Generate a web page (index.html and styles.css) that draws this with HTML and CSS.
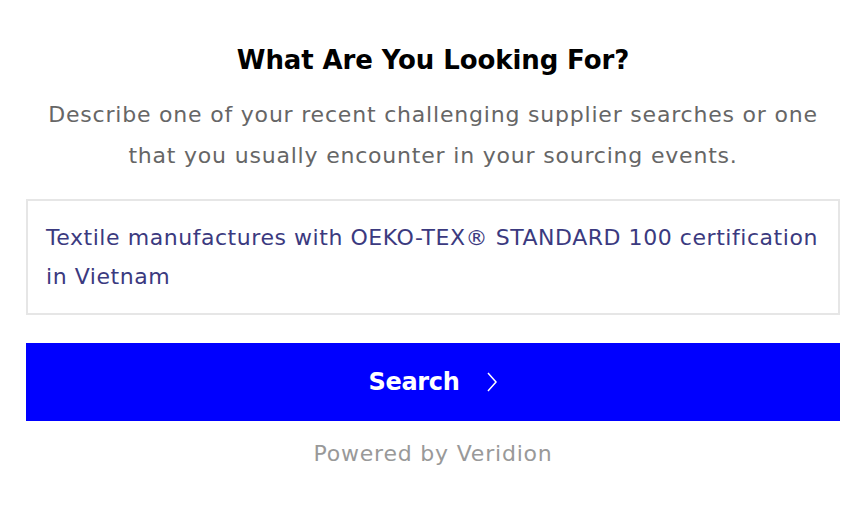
FILE: index.html
```html
<!DOCTYPE html>
<html lang="en">
  <head>
    <meta charset="UTF-8" />
    <title>Supplier Search</title>
    <link rel="stylesheet" href="styles.css">
  </head>
  <body>
    <main class="search-card">
      <h1 class="title">What Are You Looking For?</h1>
      <p class="intro">
        Describe one of your recent challenging supplier searches or one
        that you usually encounter in your sourcing events.
      </p>

      <div class="query-box">
        Textile manufactures with OEKO-TEX® STANDARD 100 certification in Vietnam
      </div>

      <button class="search-btn" type="button">
        <span>Search</span>
        <svg class="chevron" width="12" height="22" viewBox="0 0 12 22">
          <path d="M2 2 L10 11 L2 20" fill="none" stroke="#fff" stroke-width="1.5" />
        </svg>
      </button>

      <p class="powered">Powered by Veridion</p>
    </main>
  </body>
</html>
```

FILE: styles.css
```css
body {
  margin: 0;
  background: #fff;
  font-family: "DejaVu Sans", Inter, sans-serif;
}

.search-card {
  padding: 40px 25px 0 26px;
  text-align: center;
}

.title {
  margin: 0;
  font-size: 26px;
  line-height: 40px;
  font-weight: 700;
  letter-spacing: -0.1px;
  color: #000;
}

.intro {
  max-width: 790px;
  margin: 14px auto 0;
  font-size: 22px;
  line-height: 41px;
  letter-spacing: 0.8px;
  color: #666;
}

.query-box {
  margin-top: 23px;
  padding: 17px 16px 17px 18px;
  border: 2px solid #e6e6e6;
  text-align: left;
  font-size: 22px;
  line-height: 39px;
  letter-spacing: 0.55px;
  color: #3b3a7f;
}

.search-btn {
  display: flex;
  align-items: center;
  justify-content: center;
  gap: 26px;
  width: 100%;
  height: 78px;
  margin-top: 28px;
  border: none;
  background: #0000ff;
  color: #fff;
  font-family: inherit;
  font-size: 24px;
  font-weight: 700;
  letter-spacing: -0.3px;
  cursor: pointer;
}

.powered {
  margin: 18px 0 0;
  font-size: 22px;
  line-height: 30px;
  letter-spacing: 0.8px;
  color: #999;
}
```
